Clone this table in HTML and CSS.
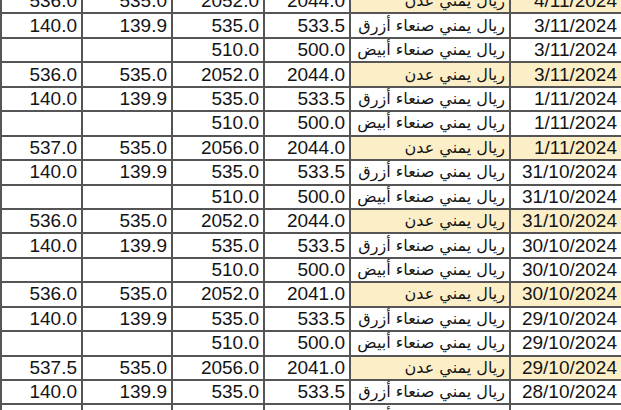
FILE: index.html
```html
<!DOCTYPE html>
<html lang="ar">
<head>
<meta charset="utf-8">
<title>أسعار الصرف</title>
<link rel="stylesheet" href="styles.css">
</head>
<body>
<table class="rates" dir="rtl">
  <colgroup>
    <col class="c-date"><col class="c-name"><col class="c-n4"><col class="c-n3"><col class="c-n2"><col class="c-n1">
  </colgroup>
  <tbody>
    <tr class="aden"><td class="num date">4/11/2024</td><td class="name">ريال يمني عدن</td><td class="num">2044.0</td><td class="num">2052.0</td><td class="num">535.0</td><td class="num">536.0</td></tr>
    <tr><td class="num date">3/11/2024</td><td class="name">ريال يمني صنعاء أزرق</td><td class="num">533.5</td><td class="num">535.0</td><td class="num">139.9</td><td class="num">140.0</td></tr>
    <tr><td class="num date">3/11/2024</td><td class="name">ريال يمني صنعاء أبيض</td><td class="num">500.0</td><td class="num">510.0</td><td class="num"></td><td class="num"></td></tr>
    <tr class="aden"><td class="num date">3/11/2024</td><td class="name">ريال يمني عدن</td><td class="num">2044.0</td><td class="num">2052.0</td><td class="num">535.0</td><td class="num">536.0</td></tr>
    <tr><td class="num date">1/11/2024</td><td class="name">ريال يمني صنعاء أزرق</td><td class="num">533.5</td><td class="num">535.0</td><td class="num">139.9</td><td class="num">140.0</td></tr>
    <tr><td class="num date">1/11/2024</td><td class="name">ريال يمني صنعاء أبيض</td><td class="num">500.0</td><td class="num">510.0</td><td class="num"></td><td class="num"></td></tr>
    <tr class="aden"><td class="num date">1/11/2024</td><td class="name">ريال يمني عدن</td><td class="num">2044.0</td><td class="num">2056.0</td><td class="num">535.0</td><td class="num">537.0</td></tr>
    <tr><td class="num date">31/10/2024</td><td class="name">ريال يمني صنعاء أزرق</td><td class="num">533.5</td><td class="num">535.0</td><td class="num">139.9</td><td class="num">140.0</td></tr>
    <tr><td class="num date">31/10/2024</td><td class="name">ريال يمني صنعاء أبيض</td><td class="num">500.0</td><td class="num">510.0</td><td class="num"></td><td class="num"></td></tr>
    <tr class="aden"><td class="num date">31/10/2024</td><td class="name">ريال يمني عدن</td><td class="num">2044.0</td><td class="num">2052.0</td><td class="num">535.0</td><td class="num">536.0</td></tr>
    <tr><td class="num date">30/10/2024</td><td class="name">ريال يمني صنعاء أزرق</td><td class="num">533.5</td><td class="num">535.0</td><td class="num">139.9</td><td class="num">140.0</td></tr>
    <tr><td class="num date">30/10/2024</td><td class="name">ريال يمني صنعاء أبيض</td><td class="num">500.0</td><td class="num">510.0</td><td class="num"></td><td class="num"></td></tr>
    <tr class="aden"><td class="num date">30/10/2024</td><td class="name">ريال يمني عدن</td><td class="num">2041.0</td><td class="num">2052.0</td><td class="num">535.0</td><td class="num">536.0</td></tr>
    <tr><td class="num date">29/10/2024</td><td class="name">ريال يمني صنعاء أزرق</td><td class="num">533.5</td><td class="num">535.0</td><td class="num">139.9</td><td class="num">140.0</td></tr>
    <tr><td class="num date">29/10/2024</td><td class="name">ريال يمني صنعاء أبيض</td><td class="num">500.0</td><td class="num">510.0</td><td class="num"></td><td class="num"></td></tr>
    <tr class="aden"><td class="num date">29/10/2024</td><td class="name">ريال يمني عدن</td><td class="num">2041.0</td><td class="num">2056.0</td><td class="num">535.0</td><td class="num">537.5</td></tr>
    <tr><td class="num date">28/10/2024</td><td class="name">ريال يمني صنعاء أزرق</td><td class="num">533.5</td><td class="num">535.0</td><td class="num">139.9</td><td class="num">140.0</td></tr>
    <tr><td class="num date">28/10/2024</td><td class="name">ريال يمني صنعاء أبيض</td><td class="num">500.0</td><td class="num">510.0</td><td class="num"></td><td class="num"></td></tr>
  </tbody>
</table>
</body>
</html>
```
FILE: styles.css
```css
html, body {
  margin: 0;
  padding: 0;
  background: #ffffff;
  overflow: hidden;
}

.rates {
  border-collapse: collapse;
  table-layout: fixed;
  width: 623px;
  margin-top: -12px;
  color: #141414;
  font-family: "Liberation Sans", Arial, sans-serif;
}

.c-date { width: 112px; }
.c-name { width: 160px; }
.c-n4 { width: 86px; }
.c-n3 { width: 92px; }
.c-n2 { width: 90px; }
.c-n1 { width: 81px; }

.rates td {
  border: 2px solid #555555;
  height: 22.45px;
  padding: 0 4px 0 4px;
  white-space: nowrap;
  overflow: hidden;
  line-height: 22px;
  vertical-align: middle;
}

.num {
  direction: ltr;
  text-align: right;
  font-size: 19px;
}

.name {
  text-align: right;
  font-family: "DejaVu Sans", sans-serif;
  font-size: 16px;
}

.aden .name,
.aden .date {
  background: #fcefc8;
}
```
